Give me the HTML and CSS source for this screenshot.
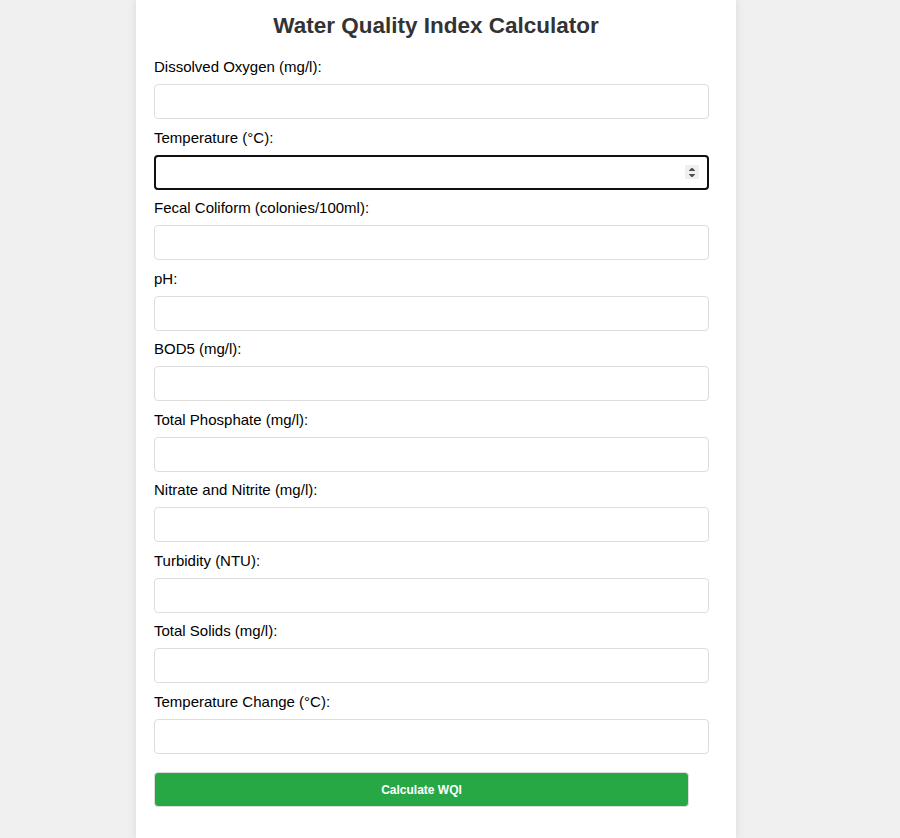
FILE: index.html
```html
<!DOCTYPE html>
<html lang="en">
<head>
<meta charset="utf-8">
<meta name="viewport" content="width=device-width, initial-scale=1">
<title>Water Quality Index Calculator</title>
<link rel="stylesheet" href="styles.css">
</head>
<body>
<main class="card">
  <h2 class="title">Water Quality Index Calculator</h2>
  <form class="form">
    <div class="field"><label for="oxygen">Dissolved Oxygen (mg/l):</label><input type="number" id="oxygen"></div>
    <div class="field">
      <label for="temperature">Temperature (°C):</label>
      <div class="stepper">
        <input type="number" id="temperature" class="active" autofocus>
        <svg class="arrows" width="14" height="14" viewBox="0 0 14 14" aria-hidden="true">
          <rect width="14" height="14" fill="#efefef"/>
          <path d="M4 6V5.4L6.4 3h1.2L10 5.4V6zM4 9v.6L6.4 12h1.2L10 9.6V9z" fill="#505050"/>
        </svg>
      </div>
    </div>
    <div class="field"><label for="coliform">Fecal Coliform (colonies/100ml):</label><input type="number" id="coliform"></div>
    <div class="field"><label for="ph">pH:</label><input type="number" id="ph"></div>
    <div class="field"><label for="bod">BOD5 (mg/l):</label><input type="number" id="bod"></div>
    <div class="field"><label for="phosphate">Total Phosphate (mg/l):</label><input type="number" id="phosphate"></div>
    <div class="field"><label for="nitrate">Nitrate and Nitrite (mg/l):</label><input type="number" id="nitrate"></div>
    <div class="field"><label for="turbidity">Turbidity (NTU):</label><input type="number" id="turbidity"></div>
    <div class="field"><label for="solids">Total Solids (mg/l):</label><input type="number" id="solids"></div>
    <div class="field"><label for="change">Temperature Change (°C):</label><input type="number" id="change"></div>
    <button type="button" class="submit">Calculate WQI</button>
  </form>
</main>
</body>
</html>
```
FILE: styles.css
```css
* {
  box-sizing: border-box;
}

body {
  margin: 0;
  padding: 0 28px 0 0;
  background: #f0f0f0;
  color: #000;
  font-family: "Liberation Sans", Arial, sans-serif;
  font-size: 15px;
}

.card {
  max-width: 600px;
  min-height: 100vh;
  margin: 0 auto;
  padding: 13px 18px 18px;
  background: #fff;
  box-shadow: 0 0 9px rgba(0, 0, 0, 0.1);
}

.title {
  margin: 0 0 19px;
  color: #333;
  line-height: 26px;
  text-align: center;
}

.form {
  padding-right: 9px;
}

.field {
  margin-bottom: 9px;
}

.field:nth-child(odd) {
  margin-bottom: 10px;
}

.field label {
  display: block;
  margin-bottom: 9px;
  line-height: 17px;
}

.field input {
  display: block;
  width: 100%;
  height: 35px;
  padding: 9px;
  border: 1px solid #ddd;
  border-radius: 4px;
  background: #fff;
  font: inherit;
}

.field input:focus,
.field input.active {
  border: 2px solid #101010;
  outline: none;
  caret-color: transparent;
}

.active::-webkit-inner-spin-button {
  appearance: none;
}

/* Step arrows drawn over the right end of the input */
.stepper {
  position: relative;
}

.arrows {
  position: absolute;
  top: 10px;
  right: 10px;
  pointer-events: none;
}

.submit {
  display: block;
  width: calc(100% - 20px);
  height: 35px;
  margin-top: 18px;
  padding: 0 9px;
  border: 1px solid #ddd;
  border-radius: 4px;
  background: #28a745;
  color: #fff;
  font: bold 12px "Liberation Sans", Arial, sans-serif;
}
```
